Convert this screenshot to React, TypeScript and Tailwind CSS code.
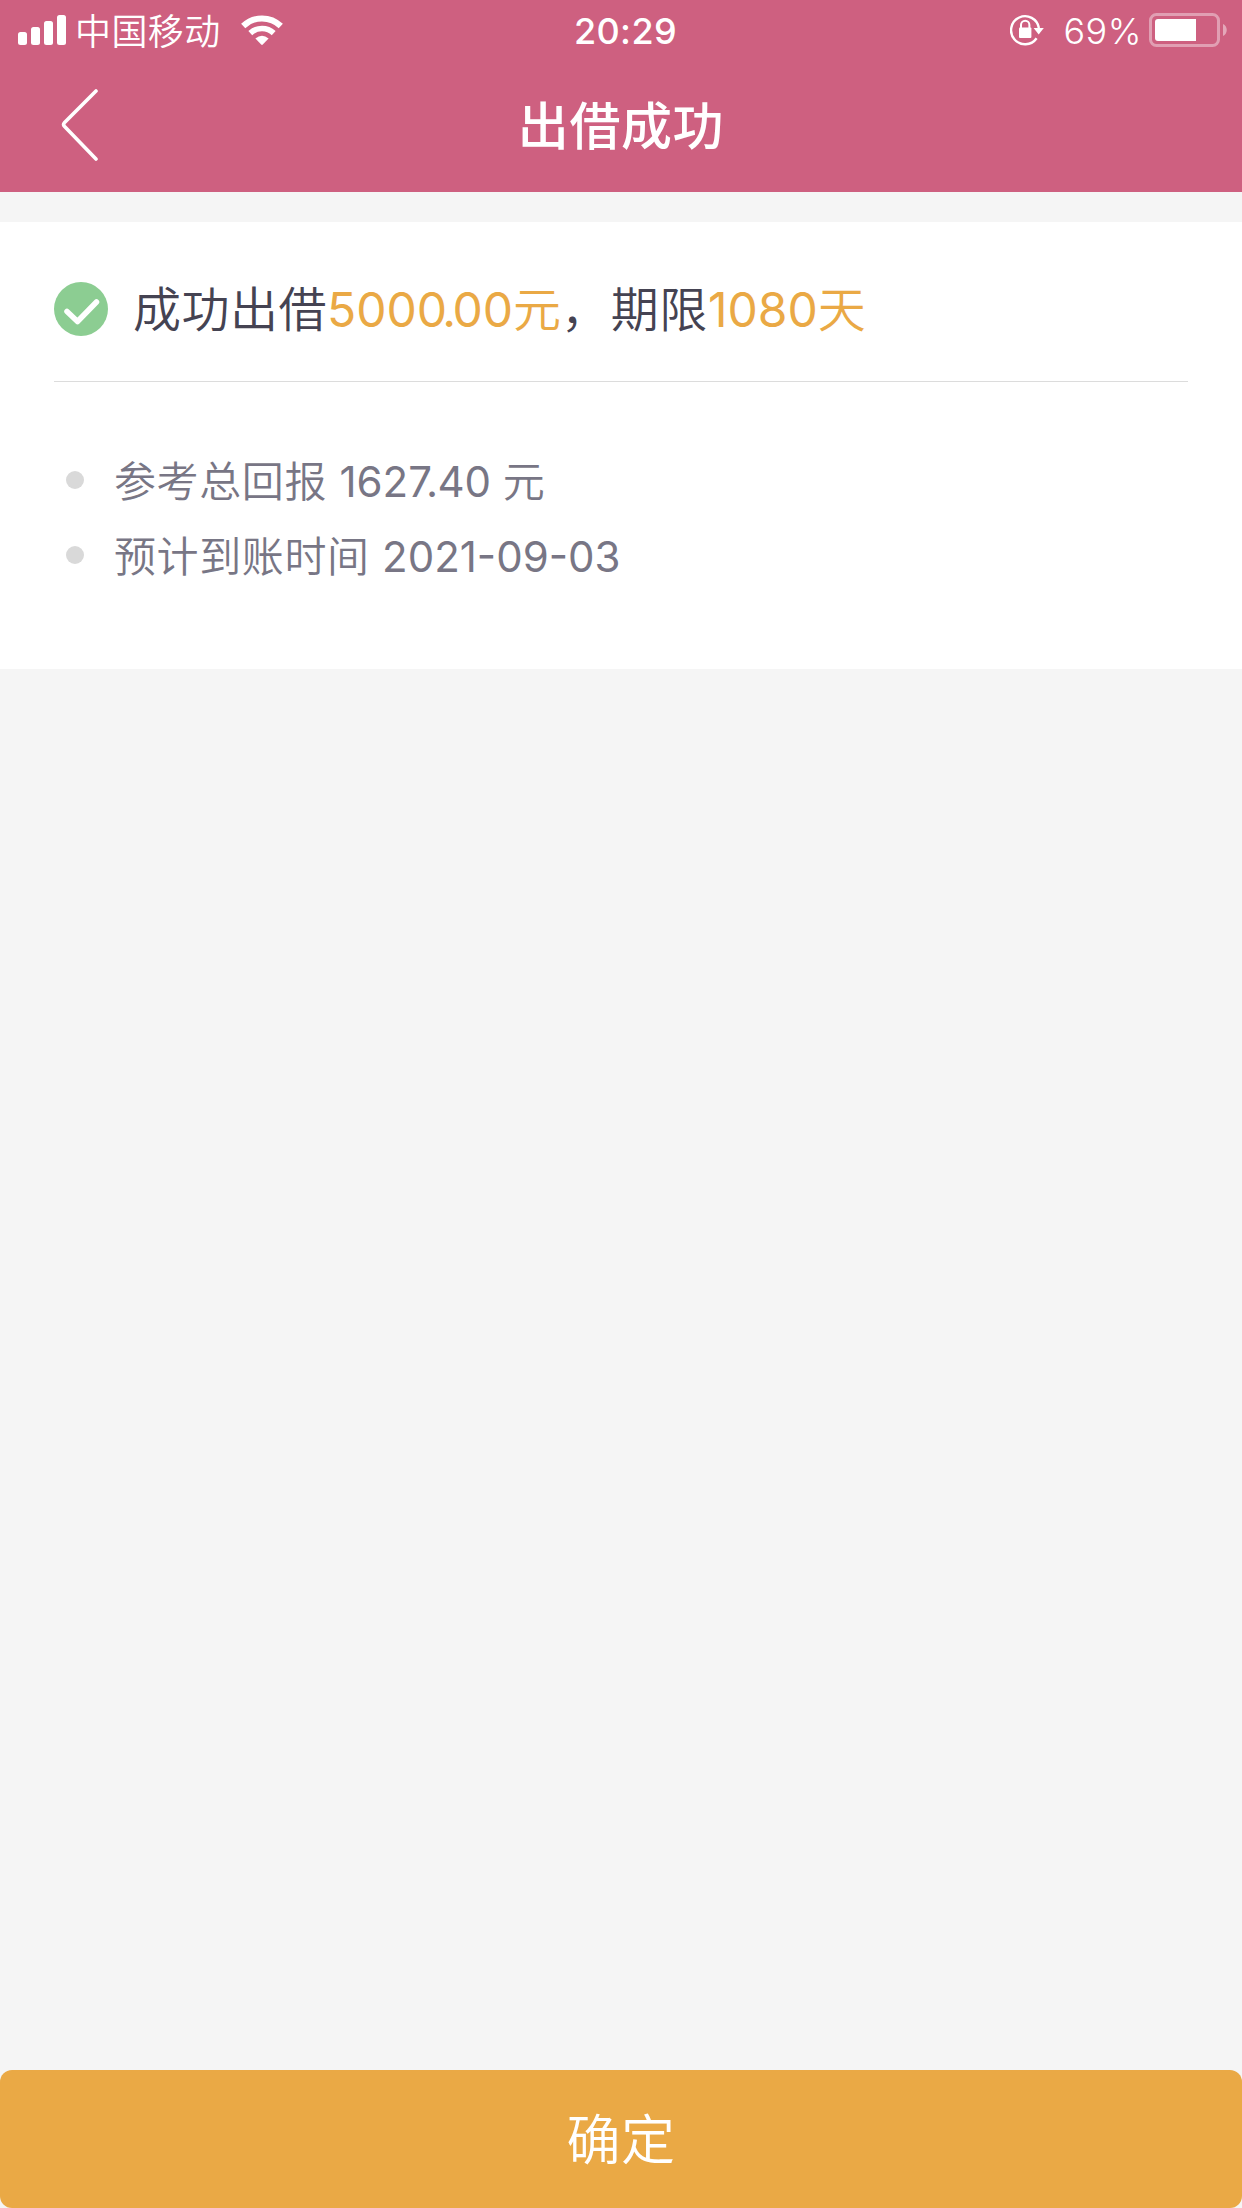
import React from "react";

function SignalBars() {
  return (
    <svg width="48" height="30" viewBox="0 0 48 30" fill="#fff">
      <rect x="0" y="17" width="9" height="13" rx="2.5" />
      <rect x="13" y="12" width="9" height="18" rx="2.5" />
      <rect x="26" y="6" width="9" height="24" rx="2.5" />
      <rect x="39" y="0" width="9" height="30" rx="2.5" />
    </svg>
  );
}

function WifiIcon() {
  return (
    <svg className="ml-5" width="42" height="30" viewBox="0 0 42 30" fill="none">
      <path d="M2.2 11 A27 27 0 0 1 39.8 11" stroke="#fff" strokeWidth="6" />
      <path d="M9.3 18.1 A17 17 0 0 1 32.7 18.1" stroke="#fff" strokeWidth="5.6" />
      <path d="M14.4 23.4 Q21 18 27.6 23.4 L21.8 29.6 Q21 30.4 20.2 29.6 Z" fill="#fff" />
    </svg>
  );
}

function RotationLockIcon() {
  return (
    <svg width="34" height="32" viewBox="0 0 34 32" fill="none">
      <path d="M26.6 24.2 A14 14 0 1 1 28.9 14" stroke="#fff" strokeWidth="2.4" />
      <path d="M23.6 14 H33.8 L28.7 20.4 Z" fill="#fff" />
      <rect x="9" y="13.5" width="12.4" height="10.5" rx="1" fill="#fff" />
      <path d="M11 14.5 V11 A4.2 4.2 0 0 1 19.4 11 V14.5" stroke="#fff" strokeWidth="2" />
    </svg>
  );
}

function BatteryIcon() {
  return (
    <svg width="79" height="34" viewBox="0 0 79 34" fill="none">
      <rect x="1.5" y="1.5" width="68" height="31" rx="6" stroke="#fff" strokeOpacity="0.4" strokeWidth="3" />
      <path d="M74 11 C79 13 79 21 74 23 Z" fill="#fff" fillOpacity="0.45" />
      <path d="M9 6 H47 V28 H9 Q6 28 6 25 V9 Q6 6 9 6 Z" fill="#fff" />
    </svg>
  );
}

function StatusBar() {
  return (
    <div className="grid h-[60px] grid-cols-3 items-center text-[36px] leading-none text-white">
      <div className="flex items-center pl-[18px]">
        <SignalBars />
        <span className="ml-[9px] pt-[3px] font-[350] tracking-[0.4px]">中国移动</span>
        <WifiIcon />
      </div>
      <div className="pl-[9px] pt-0.5 text-center font-[550] tracking-[0.4px]">20:29</div>
      <div className="flex items-center justify-end pr-[14px]">
        <RotationLockIcon />
        <span className="ml-[19px] mr-[7px] pt-0.5 font-[360] tracking-[0.5px]">69%</span>
        <BatteryIcon />
      </div>
    </div>
  );
}

function Header() {
  return (
    <header className="h-48 bg-[#ce6080]">
      <StatusBar />
      <div className="grid h-[132px] grid-cols-3 items-center">
        <button aria-label="返回" className="mb-[3px] ml-[61px] h-[72px] w-[38px]">
          <svg width="38" height="72" viewBox="0 0 38 72" fill="none">
            <path d="M35 2 L3.6 33.4 Q1.6 35.6 3.6 37.6 L35 70" stroke="#fff" strokeWidth="3.6" strokeLinecap="round" />
          </svg>
        </button>
        <h1 className="pt-px text-center text-[51px] font-medium leading-none tracking-[0.6px] text-white">出借成功</h1>
      </div>
    </header>
  );
}

function Detail({ label, children }: { label: string; children: React.ReactNode }) {
  return (
    <li className="flex h-[75px] items-center text-[42px] leading-none text-[#787685]">
      <span className="mb-0.5 mr-[30px] size-[18px] rounded-full bg-[#d9d9d9]" />
      <span className="whitespace-pre pt-0.5 font-[350]">
        <span className="tracking-[0.6px]">{label} </span>
        <span className="font-[380]">{children}</span>
      </span>
    </li>
  );
}

export default function App() {
  return (
    <div className="flex h-[2208px] w-[1242px] flex-col bg-[#f5f5f5] font-['Inter','Noto_Sans_CJK_SC',sans-serif]">
      <Header />
      <main className="mt-[30px] h-[447px] bg-white px-[54px]">
        <div className="flex h-40 items-center border-b border-[#dcdcdc] pb-px">
          <svg width="54" height="54" viewBox="0 0 54 54" fill="none" className="mt-4">
            <circle cx="27" cy="27" r="27" fill="#8ccd92" />
            <path d="M13 29.5 L23.5 39.5 L42.5 20" stroke="#fff" strokeWidth="5.5" strokeLinecap="round" strokeLinejoin="round" />
          </svg>
          <p className="ml-[25px] mt-[17px] whitespace-nowrap text-[48px] font-[350] leading-none text-[#454352]">
            <span className="tracking-[0.5px]">成功出借</span>
            <span className="text-[#eaa945]">
              <span className="font-[380]">500<span className="tracking-[-3.6px]">0.</span>00</span>元
            </span>
            <span className="tracking-[0.8px]">，</span>
            <span className="ml-px tracking-[0.5px]">期限</span>
            <span className="text-[#eaa945]"><span className="font-[380]">1080</span>天</span>
          </p>
        </div>
        <ul className="pl-3 pt-[61px]">
          <Detail label="参考总回报">
            162<span className="tracking-[-0.7px]">7.</span>40 <span className="font-[350]">元</span>
          </Detail>
          <Detail label="预计到账时间">2021-09-03</Detail>
        </ul>
      </main>
      <button className="mt-auto h-[138px] w-full rounded-xl bg-[#eaa945] pt-[3px] text-[54px] font-[350] leading-none tracking-[0.5px] text-white">确定</button>
    </div>
  );
}
